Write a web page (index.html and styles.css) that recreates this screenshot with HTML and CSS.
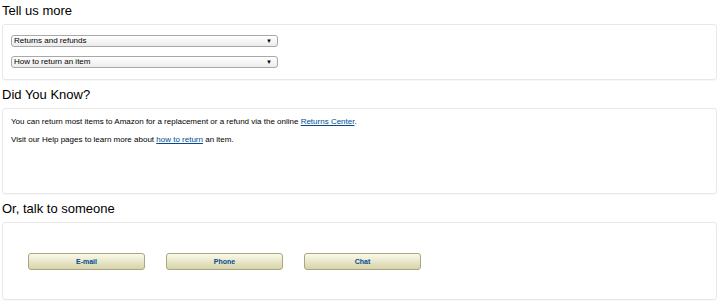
FILE: index.html
```html
<!DOCTYPE html>
<html lang="en">

<head>
    <meta charset="UTF-8">
    <meta name="viewport" content="width=device-width, initial-scale=1.0">
    <title>Contact Us</title>
    <link rel="stylesheet" href="styles.css">
</head>

<body>
    <div id="wrap">
        <div class="section">
            <h2 class="title">Tell us more</h2>
            <div class="box box-select">
                <div class="select">
                    <span>Returns and refunds</span>
                    <span class="arrow">&#9660;</span>
                </div>
                <div class="select">
                    <span>How to return an item</span>
                    <span class="arrow">&#9660;</span>
                </div>
            </div>
        </div>

        <div class="section">
            <h2 class="title">Did You Know?</h2>
            <div class="box box-info">
                <p>You can return most items to Amazon for a replacement or a refund via the online <a href="#">Returns Center</a>.</p>
                <p>Visit our Help pages to learn more about <a href="#">how to return</a> an item.</p>
            </div>
        </div>

        <div class="section">
            <h2 class="title">Or, talk to someone</h2>
            <div class="box box-contact">
                <button class="btn">E-mail</button>
                <button class="btn">Phone</button>
                <button class="btn">Chat</button>
            </div>
        </div>
    </div>
</body>

</html>
```

FILE: styles.css
```css
body {
    margin: 0;
    font-family: "Liberation Sans", Arial, sans-serif;
    color: #000;
    background: #fff;
}

#wrap {
    padding: 0 3px 0 2px;
}

.section {
    margin-bottom: 4px;
}

.title {
    margin: 0;
    padding: 3px 0 5px;
    font-size: 13px;
    font-weight: normal;
    line-height: 16px;
}

.box {
    border: 1px solid #e8e8e8;
    border-radius: 3px;
    box-shadow: 0 1px 1px rgba(0, 0, 0, 0.03);
}

.box-select {
    height: 34px;
    padding: 10px 8px 10px;
}

.select {
    display: flex;
    justify-content: space-between;
    align-items: center;
    width: 258px;
    height: 10px;
    padding: 0 5px 0 2px;
    margin-bottom: 9px;
    border: 1px solid #a8a8a8;
    border-radius: 3px;
    background: linear-gradient(#ffffff, #ececec);
    font-size: 8px;
    line-height: 10px;
}

.select .arrow {
    font-size: 6px;
}

.box-info {
    height: 70px;
    padding: 7px 8px 7px;
}

.box-info p {
    margin: 0 0 7px;
    font-size: 8px;
    line-height: 11px;
}

.box-info a {
    color: #004b91;
    text-decoration: underline;
}

.box-contact {
    height: 75px;
    display: flex;
    align-items: center;
    gap: 21px;
    padding: 1px 25px 0;
}

.btn {
    width: 117px;
    height: 17px;
    padding: 0;
    border: 1px solid #aaa67f;
    border-radius: 3px;
    background: linear-gradient(#fbfaea, #e5e2c2 60%, #d6d3ab);
    color: #004b91;
    font-family: "Liberation Sans", Arial, sans-serif;
    font-size: 7px;
    font-weight: bold;
    cursor: pointer;
}
```
